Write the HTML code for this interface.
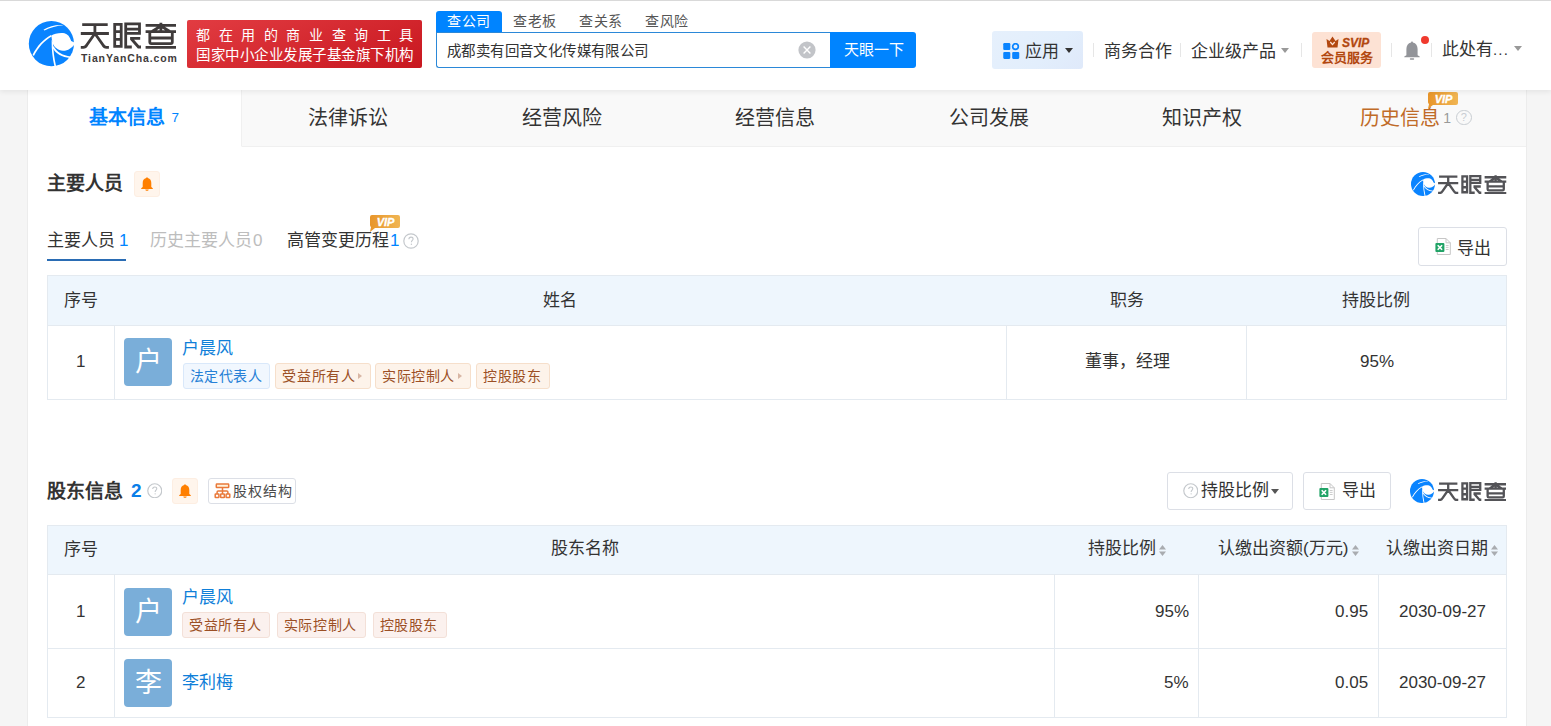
<!DOCTYPE html>
<html lang="zh-CN">
<head>
<meta charset="utf-8">
<style>
*{margin:0;padding:0;box-sizing:border-box}
html,body{width:1551px;height:726px;overflow:hidden}
body{background:#f5f5f5;font-family:"Liberation Sans",sans-serif;color:#333;position:relative}
.a{position:absolute;white-space:nowrap}
#hdr{position:absolute;left:0;top:0;width:1551px;height:90px;background:#fff;border-top:0;box-shadow:0 2px 5px rgba(0,0,0,.07);z-index:2}
.sep{position:absolute;width:1px;height:14px;background:#e6e6e6;top:43px}
.caret{position:absolute;width:0;height:0;border-left:4px solid transparent;border-right:4px solid transparent;border-top:5px solid #999}
#card{position:absolute;left:27px;top:90px;width:1500px;height:640px;background:#fff;border:1px solid #ececec;border-top:none}
.tab{position:absolute;top:0;height:57px;width:213.5px;background:#f9f9f9;border-bottom:1px solid #f0f0f0;font-size:20px;line-height:56px;text-align:center;color:#333}
.title{font-size:19px;font-weight:bold;color:#333;line-height:24px}
.bellbox{position:absolute;width:26px;height:26px;background:#fff5ec;border:1px solid #fdeee2;border-radius:3px}
.subtab{font-size:17px;line-height:20px;color:#333}
.btn{position:absolute;background:#fff;border:1px solid #dcdfe6;border-radius:3px}
table{border-collapse:collapse;position:absolute;table-layout:fixed}
td,th{border:1px solid #e4eaf0;font-size:17px;font-weight:normal;color:#333}
th{background:#eef6fd}
.av{position:absolute;left:9px;width:48px;height:48px;border-radius:4px;background:#7aaed9;color:#fff;font-size:27px;line-height:48px;text-align:center}
.nm{position:absolute;left:67px;font-size:17px;color:#0084ff;line-height:20px}
.tag{position:absolute;height:26px;line-height:24px;font-size:14px;letter-spacing:.6px;border:1px solid;border-radius:3px;padding:0 0 0 6px}
.arr{display:inline-block;width:0;height:0;border-left:4px solid #d8b6a4;border-top:3.3px solid transparent;border-bottom:3.3px solid transparent;margin-left:2.5px;vertical-align:middle;position:relative;top:-1px}
.tb{background:#f1f7fe;border-color:#d9e8fa;color:#2580d6}
.to{background:#fdf3ea;border-color:#f6dfcb;color:#9b4f25}
.tp{background:#fbf1ee;border-color:#f3e0d8;color:#9b4f25}
.logo-t{font-weight:bold;color:#3e3a3a}
</style>
</head>
<body>
<div id="hdr">
  <div class="a" style="left:0;top:0;width:1551px;height:1px;background:#d9d9d9"></div>
  <!-- logo -->
  <svg class="a" style="left:20px;top:14px" width="60" height="60" viewBox="20 14 60 60">
    <circle cx="51.4" cy="43.7" r="22.6" fill="#0a84ff"/>
    <path d="M51.4 35.5 C54 33.8 59.5 32.6 64.5 33.3 C67.5 34 70 37 71.2 41 L74.4 42.6 L74.2 44.4 C72.5 47.5 67.5 51 63 50.8 C58 50.6 54 47 52.6 43 C51.9 40.5 51.6 38 51.4 35.5Z" fill="#fff"/>
    <path d="M43.5 29.8 C49 26.5 56 24.5 63.5 25.2 C57 25.7 50 27.5 44.5 30.6 Z" fill="#fff"/>
    <path d="M32.6 54.8 C37 46 43 39.5 51 35 L51.8 36.5 C44.5 40.5 38.5 47 33.9 55.9 Z" fill="#fff"/>
    <path d="M51.6 40 C51.5 50 52.5 58 54.5 66.4 L56.1 66.2 C54.2 58 53.2 50 53 42 Z" fill="#fff"/>
    <path d="M53.5 46 C57 52.5 63 55.5 70.5 56.5 L70 57.9 C62 57.2 56 54 52.5 48 Z" fill="#fff"/>
  </svg>
  <svg class="a" style="left:78px;top:18px" width="102" height="34" viewBox="78 18 102 34" fill="none" stroke="#3f3b3b" stroke-width="2.8">
    <path d="M82.2 24.6 H107.7 M80.8 33.5 H108.9 M94.9 25 V34"/>
    <path d="M94.2 34.5 L86.8 45 Q85.6 47.3 83.3 47.3 H80.8 M95.6 34.5 L103 45 Q104.2 47.3 106.5 47.3 H108.9"/>
    <path d="M114.7 24.3 H121.2 V46.3 H114.7 Z M114.7 31.6 H121.2 M114.7 39.3 H121.2"/>
    <path d="M125.7 22.4 V47 H131.8 M125.7 23.8 H139.5 V33.3 H125.7 M125.7 29.1 H139.5 M130.1 38.3 H140.2 M131 38.5 L138.5 47 H141"/>
    <path d="M145.6 25.4 H176 M145.6 31.6 H176 M145.6 47.4 H176 M160.9 22.7 V31 M160 26.5 L152 31.5 M161.8 26.5 L169.8 31.5"/>
    <path d="M149.8 32 V42 Q149.8 43.6 151.4 43.6 H170.7 Q172.3 43.6 172.3 42 V32 M149.8 38 H172.3"/>
  </svg>
  <div class="a" style="left:81px;top:52px;font-size:10.5px;line-height:13px;font-weight:bold;color:#3e3a3a;letter-spacing:0.88px">TianYanCha.com</div>
  <!-- red banner -->
  <div class="a" style="left:187px;top:20px;width:235px;height:48px;border-radius:2px;background:linear-gradient(160deg,#e23c42,#c8171f)"></div>
  <div class="a" style="left:196px;top:25px;font-size:14px;line-height:20px;color:#fff;letter-spacing:8.6px">都在用的商业查询工具</div>
  <div class="a" style="left:196px;top:45px;font-size:14.5px;letter-spacing:0.5px;line-height:20px;color:#fff">国家中小企业发展子基金旗下机构</div>
  <!-- search tabs -->
  <div class="a" style="left:436px;top:11px;width:66px;height:22px;background:#0084ff;border-radius:3px 3px 0 0"></div>
  <div class="a" style="left:447px;top:11px;font-size:14px;letter-spacing:.6px;line-height:20px;color:#fff">查公司</div>
  <div class="a" style="left:513px;top:11px;font-size:14px;letter-spacing:.6px;line-height:20px;color:#555">查老板</div>
  <div class="a" style="left:579px;top:11px;font-size:14px;letter-spacing:.6px;line-height:20px;color:#555">查关系</div>
  <div class="a" style="left:645px;top:11px;font-size:14px;letter-spacing:.6px;line-height:20px;color:#555">查风险</div>
  <div class="a" style="left:436px;top:32px;width:396px;height:36px;border:1px solid #2b88d8;border-right:none;border-radius:0 0 0 3px;background:#fff"></div>
  <div class="a" style="left:447px;top:41px;font-size:14.5px;letter-spacing:.4px;line-height:20px;color:#333">成都卖有回音文化传媒有限公司</div>
  <svg class="a" style="left:798px;top:41px" width="18" height="18" viewBox="0 0 18 18"><circle cx="9" cy="9" r="8.6" fill="#c2c4c8"/><path d="M5.6 5.6 L12.4 12.4 M12.4 5.6 L5.6 12.4" stroke="#fff" stroke-width="1.4"/></svg>
  <div class="a" style="left:830px;top:32px;width:86px;height:36px;background:#0084ff;border-radius:0 3px 3px 0"></div>
  <div class="a" style="left:844px;top:40px;font-size:15px;line-height:20px;color:#fff">天眼一下</div>
  <!-- right nav -->
  <div class="a" style="left:992px;top:31px;width:91px;height:38px;border-radius:3px;background:linear-gradient(135deg,#e6f0fc 0%,#e2eefc 60%,#dfe9fa 100%)"></div>
  <svg class="a" style="left:1003px;top:42.5px" width="16.5" height="16" viewBox="0 0 17 17">
    <rect x="0" y="0" width="7.5" height="7.5" rx="1.2" fill="#0a84ff"/>
    <circle cx="13" cy="3.8" r="3" fill="none" stroke="#0a84ff" stroke-width="1.8"/>
    <rect x="0" y="9.5" width="7.5" height="7.5" rx="1.2" fill="#0a84ff"/>
    <rect x="9.5" y="9.5" width="7.5" height="7.5" rx="1.2" fill="#0a84ff"/>
  </svg>
  <div class="a" style="left:1025px;top:41px;font-size:17px;line-height:22px;color:#333">应用</div>
  <div class="caret" style="left:1065px;top:48px;border-top-color:#333"></div>
  <div class="sep" style="left:1093px"></div>
  <div class="a" style="left:1104px;top:41px;font-size:17px;line-height:22px;color:#333">商务合作</div>
  <div class="sep" style="left:1180px"></div>
  <div class="a" style="left:1191px;top:41px;font-size:17px;line-height:22px;color:#333">企业级产品</div>
  <div class="caret" style="left:1281px;top:48px"></div>
  <div class="sep" style="left:1301px"></div>
  <div class="a" style="left:1312px;top:32px;width:69px;height:36px;border-radius:3px;background:#fde2d4"></div>
  <svg class="a" style="left:1326px;top:36px" width="13" height="12" viewBox="0 0 13 12">
    <path d="M0.5 3 L3.5 5 L6.5 0.5 L9.5 5 L12.5 3 L11.5 11.5 L1.5 11.5 Z" fill="#b2470f"/>
    <path d="M4.3 6 L6.5 8.6 L8.7 6" stroke="#fde2d4" stroke-width="1.3" fill="none"/>
  </svg>
  <div class="a" style="left:1342px;top:35.5px;font-size:12px;line-height:14px;font-weight:bold;font-style:italic;color:#b2470f;-webkit-text-stroke:.3px #b2470f">SVIP</div>
  <div class="a" style="left:1321px;top:49px;font-size:13px;line-height:17px;font-weight:bold;color:#b2470f">会员服务</div>
  <div class="sep" style="left:1391px"></div>
  <svg class="a" style="left:1404px;top:41px" width="16" height="19" viewBox="0 0 16 19">
    <path d="M8 0.5 C8.6 0.5 8.9 1 8.9 1.4 C12 2 13.6 4.6 13.6 8 L13.6 14.3 L15.7 15.6 L15.7 16.3 L0.3 16.3 L0.3 15.6 L2.4 14.3 L2.4 8 C2.4 4.6 4 2 7.1 1.4 C7.1 1 7.4 0.5 8 0.5Z" fill="#929499"/>
    <rect x="5.8" y="17.3" width="4.4" height="1.5" rx=".7" fill="#929499"/>
  </svg>
  <div class="a" style="left:1421px;top:36px;width:8px;height:8px;border-radius:50%;background:#f03a2e"></div>
  <div class="sep" style="left:1431px"></div>
  <div class="a" style="left:1442px;top:39px;font-size:17px;line-height:22px;color:#333">此处有<span style="letter-spacing:1.2px;font-size:15px">...</span></div>
  <div class="caret" style="left:1514px;top:46px"></div>
</div>

<div id="card">
  <div class="tab" style="left:0;width:213.5px;border-right:1px solid #f0f0f0;background:#fff;border-bottom-color:#fff;color:#0084ff;font-weight:bold;font-size:19px">基本信息<span style="font-size:13.5px;font-weight:normal;margin-left:6px;position:relative;top:-2px">7</span></div>
  <div class="tab" style="left:213.5px">法律诉讼</div>
  <div class="tab" style="left:427px">经营风险</div>
  <div class="tab" style="left:640.5px">经营信息</div>
  <div class="tab" style="left:854px">公司发展</div>
  <div class="tab" style="left:1067.5px">知识产权</div>
  <div class="tab" style="left:1281px;width:217px;color:#c06b28"><span style="position:relative;left:-1.5px">历史信息<span style="font-size:14px;color:#999;margin-left:3px;position:relative;top:-2px">1</span><span style="display:inline-block;width:15.5px;height:15.5px;border:1.3px solid #c8cdd2;border-radius:50%;font-size:11px;line-height:13px;color:#c8cdd2;margin-left:5px;vertical-align:middle;position:relative;top:-2px">?</span></span></div>
  <svg class="a" style="left:1399px;top:1px" width="32" height="18" viewBox="0 0 32 18"><defs><linearGradient id="vg" x1="0" y1="0" x2="1" y2="0"><stop offset="0" stop-color="#e8952a"/><stop offset="1" stop-color="#f0b553"/></linearGradient></defs><path d="M3 1 H29 Q31 1 31 3 V12 Q31 14 29 14 H6 L1 18 L2 13 Q1 12.5 1 11 V3 Q1 1 3 1Z" fill="url(#vg)"/><text x="16.5" y="11.6" font-size="11" font-weight="bold" font-style="italic" fill="#fff" stroke="#fff" stroke-width=".35" text-anchor="middle" font-family="Liberation Sans">VIP</text></svg>
</div>

<!-- section 1 -->
<svg width="0" height="0" style="position:absolute">
  <defs>
    <linearGradient id="vg2" x1="0" y1="0" x2="1" y2="0"><stop offset="0" stop-color="#e8952a"/><stop offset="1" stop-color="#f0b553"/></linearGradient>
    <symbol id="ico" viewBox="28.8 21.1 45.2 45.2">
      <circle cx="51.4" cy="43.7" r="22.6" fill="#0a84ff"/>
      <path d="M51.4 35.5 C54 33.8 59.5 32.6 64.5 33.3 C67.5 34 70 37 71.2 41 L74.4 42.6 L74.2 44.4 C72.5 47.5 67.5 51 63 50.8 C58 50.6 54 47 52.6 43 C51.9 40.5 51.6 38 51.4 35.5Z" fill="#fff"/>
      <path d="M43.5 29.8 C49 26.5 56 24.5 63.5 25.2 C57 25.7 50 27.5 44.5 30.6 Z" fill="#fff"/>
      <path d="M32.6 54.8 C37 46 43 39.5 51 35 L51.8 36.5 C44.5 40.5 38.5 47 33.9 55.9 Z" fill="#fff"/>
      <path d="M51.6 40 C51.5 50 52.5 58 54.5 66.4 L56.1 66.2 C54.2 58 53.2 50 53 42 Z" fill="#fff"/>
      <path d="M53.5 46 C57 52.5 63 55.5 70.5 56.5 L70 57.9 C62 57.2 56 54 52.5 48 Z" fill="#fff"/>
    </symbol>
    <symbol id="lt" viewBox="80.7 22.3 95.5 26.4">
      <g fill="none" stroke="#4b4848" stroke-width="2.9">
      <path d="M82.2 24.6 H107.7 M80.8 33.5 H108.9 M94.9 25 V34"/>
      <path d="M94.2 34.5 L86.8 45 Q85.6 47.3 83.3 47.3 H80.8 M95.6 34.5 L103 45 Q104.2 47.3 106.5 47.3 H108.9"/>
      <path d="M114.7 24.3 H121.2 V46.3 H114.7 Z M114.7 31.6 H121.2 M114.7 39.3 H121.2"/>
      <path d="M125.7 22.4 V47 H131.8 M125.7 23.8 H139.5 V33.3 H125.7 M125.7 29.1 H139.5 M130.1 38.3 H140.2 M131 38.5 L138.5 47 H141"/>
      <path d="M145.6 25.4 H176 M145.6 31.6 H176 M145.6 47.4 H176 M160.9 22.7 V31 M160 26.5 L152 31.5 M161.8 26.5 L169.8 31.5"/>
      <path d="M149.8 32 V42 Q149.8 43.6 151.4 43.6 H170.7 Q172.3 43.6 172.3 42 V32 M149.8 38 H172.3"/>
      </g>
    </symbol>
    <symbol id="lt2" viewBox="80.7 22.3 95.5 26.4">
      <g fill="none" stroke="#535357" stroke-width="3.2">
      <path d="M82.2 24.6 H107.7 M80.8 33.5 H108.9 M94.9 25 V34"/>
      <path d="M94.2 34.5 L86.8 45 Q85.6 47.3 83.3 47.3 H80.8 M95.6 34.5 L103 45 Q104.2 47.3 106.5 47.3 H108.9"/>
      <path d="M114.7 24.3 H121.2 V46.3 H114.7 Z M114.7 31.6 H121.2 M114.7 39.3 H121.2"/>
      <path d="M125.7 22.4 V47 H131.8 M125.7 23.8 H139.5 V33.3 H125.7 M125.7 29.1 H139.5 M130.1 38.3 H140.2 M131 38.5 L138.5 47 H141"/>
      <path d="M145.6 25.4 H176 M145.6 31.6 H176 M145.6 47.4 H176 M160.9 22.7 V31 M160 26.5 L152 31.5 M161.8 26.5 L169.8 31.5"/>
      <path d="M149.8 32 V42 Q149.8 43.6 151.4 43.6 H170.7 Q172.3 43.6 172.3 42 V32 M149.8 38 H172.3"/>
      </g>
    </symbol>
    <symbol id="bell" viewBox="0 0 12 14"><path d="M6 0.3 C6.5 0.3 6.8 .7 6.8 1.1 C9.3 1.6 10.3 3.6 10.3 6 L10.3 10 L11.8 11.3 L11.8 11.9 L0.2 11.9 L0.2 11.3 L1.7 10 L1.7 6 C1.7 3.6 2.7 1.6 5.2 1.1 C5.2 .7 5.5 .3 6 .3Z M4.3 12.5 L7.7 12.5 C7.7 13.3 7 13.8 6 13.8 C5 13.8 4.3 13.3 4.3 12.5Z" fill="#ff7f00"/></symbol>
    <symbol id="q" viewBox="0 0 16 16"><circle cx="8" cy="8" r="7.2" fill="none" stroke="#c4c8cc" stroke-width="1.2"/><path d="M5.9 6.2 C5.9 4.9 6.8 4.1 8 4.1 C9.2 4.1 10.1 4.9 10.1 6 C10.1 7.3 8.4 7.6 8.4 9.2" fill="none" stroke="#c4c8cc" stroke-width="1.1"/><circle cx="8.4" cy="11.2" r=".7" fill="#c4c8cc"/></symbol>
    <symbol id="xl" viewBox="0 0 16 17"><path d="M2.3 0.5 H11 L15.3 4.8 V16.5 H2.3 Z" fill="#fff" stroke="#c6c6c6" stroke-width="1"/><path d="M11 0.5 V4.8 H15.3" fill="none" stroke="#c6c6c6" stroke-width="1"/><rect x="0.4" y="5" width="9" height="9" rx="1" fill="#21a366"/><path d="M2.7 7.2 L7.1 11.8 M7.1 7.2 L2.7 11.8" stroke="#fff" stroke-width="1.6"/><path d="M10.8 7.5 H13.6 M10.8 9.4 H13.6 M10.8 11.5 H13.6" stroke="#c6c6c6" stroke-width=".9"/></symbol>
    <symbol id="vip" viewBox="0 0 32 18"><path d="M3 1 H29 Q31 1 31 3 V12 Q31 14 29 14 H6 L1 18 L2 13 Q1 12.5 1 11 V3 Q1 1 3 1Z" fill="url(#vg2)"/><text x="16.5" y="11.6" font-size="11" font-weight="bold" font-style="italic" fill="#fff" stroke="#fff" stroke-width=".35" text-anchor="middle" font-family="Liberation Sans">VIP</text></symbol>
    <symbol id="sort" viewBox="0 0 7 11"><path d="M3.5 0 L7 4.6 H0Z M3.5 11 L7 6.4 H0Z" fill="#a9acb0"/></symbol>
  </defs>
</svg>
<div class="a title" style="left:47px;top:172px">主要人员</div>
<div class="bellbox" style="left:134px;top:171px"></div>
<svg class="a" style="left:140.7px;top:176.6px" width="12" height="14"><use href="#bell"/></svg>
<svg class="a" style="left:1410.7px;top:171.9px" width="24" height="24"><use href="#ico"/></svg>
<svg class="a" style="left:1438px;top:174.9px" width="68.6" height="19"><use href="#lt2"/></svg>

<div class="a subtab" style="left:47px;top:231px">主要人员<span style="color:#0084ff;margin-left:4px">1</span></div>
<div class="a" style="left:47px;top:259px;width:79px;height:2px;background:#2a6cb4"></div>
<div class="a subtab" style="left:150px;top:231px;color:#bdbdbd">历史主要人员<span style="margin-left:1px">0</span></div>
<div class="a subtab" style="left:287px;top:231px">高管变更历程<span style="color:#0084ff;margin-left:1px">1</span></div>
<svg class="a" style="left:369px;top:214px" width="32" height="18"><use href="#vip"/></svg>
<svg class="a" style="left:402.5px;top:232.5px" width="16" height="16"><use href="#q"/></svg>
<div class="btn" style="left:1418px;top:227px;width:89px;height:39px"></div>
<svg class="a" style="left:1434.5px;top:238px" width="16" height="17"><use href="#xl"/></svg>
<div class="a subtab" style="left:1457px;top:239px">导出</div>

<!-- table 1 -->
<div class="a" style="left:47px;top:275px;width:1460px;height:125px;border:1px solid #e4eaf0;background:#fff"></div>
<div class="a" style="left:48px;top:276px;width:1458px;height:49px;background:#eef6fd"></div>
<div class="a" style="left:48px;top:325px;width:1458px;height:1px;background:#e4eaf0"></div>
<div class="a" style="left:114px;top:325px;width:1px;height:75px;background:#e4eaf0"></div>
<div class="a" style="left:1006px;top:325px;width:1px;height:75px;background:#e4eaf0"></div>
<div class="a" style="left:1246px;top:325px;width:1px;height:75px;background:#e4eaf0"></div>
<div class="a subtab" style="left:64px;top:291px">序号</div>
<div class="a subtab" style="left:543px;top:291px">姓名</div>
<div class="a subtab" style="left:1110px;top:291px">职务</div>
<div class="a subtab" style="left:1342px;top:291px">持股比例</div>
<div class="a subtab" style="left:76px;top:352px">1</div>
<div class="a" style="left:124px;top:338px;width:48px;height:48px;border-radius:4px;background:#7aaed9;color:#fff;font-size:27px;line-height:48px;text-align:center">户</div>
<div class="a subtab" style="left:182px;top:339px;color:#0f7fd9">户晨风</div>
<div class="tag tb" style="left:182.5px;top:363px;width:87px">法定代表人</div>
<div class="tag to" style="left:275.4px;top:363px;width:95.4px">受益所有人<span class="arr"></span></div>
<div class="tag to" style="left:375px;top:363px;width:95.6px">实际控制人<span class="arr"></span></div>
<div class="tag to" style="left:476px;top:363px;width:73.5px">控股股东</div>
<div class="a subtab" style="left:1085px;top:352px">董事，经理</div>
<div class="a subtab" style="left:1360px;top:352px">95%</div>

<!-- section 2 -->
<div class="a title" style="left:47px;top:480px">股东信息<span style="color:#0a7ee8;margin-left:8px;position:relative;top:-1px">2</span></div>
<svg class="a" style="left:146.5px;top:482.7px" width="15.5" height="15.5"><use href="#q"/></svg>
<div class="bellbox" style="left:172px;top:478px"></div>
<svg class="a" style="left:178.7px;top:483.6px" width="12" height="14"><use href="#bell"/></svg>
<div class="btn" style="left:208px;top:478px;width:88px;height:26px"></div>
<svg class="a" style="left:214px;top:483px" width="17" height="16" viewBox="0 0 17 16" fill="none" stroke="#e9793a" stroke-width="1.5"><rect x="2.3" y="1.1" width="12.4" height="3.5" rx=".6" fill="#fff3dc"/><path d="M8.5 4.8 V8 M3.1 11 V9 Q3.1 8 4.1 8 H12.9 Q13.9 8 13.9 9 V11 M8.5 8 V11"/><rect x="1.2" y="11.1" width="3.7" height="3.4" rx=".5"/><rect x="6.65" y="11.1" width="3.7" height="3.4" rx=".5"/><rect x="12.1" y="11.1" width="3.7" height="3.4" rx=".5"/></svg>
<div class="a" style="left:233px;top:481px;font-size:14px;letter-spacing:1px;line-height:20px;color:#4a4a4a">股权结构</div>
<div class="btn" style="left:1167px;top:472px;width:126px;height:38px"></div>
<svg class="a" style="left:1182.5px;top:483px" width="15.5" height="15.5"><use href="#q"/></svg>
<div class="a subtab" style="left:1201px;top:481px">持股比例</div>
<div class="caret" style="left:1271px;top:489px;border-top-color:#555"></div>
<div class="btn" style="left:1303px;top:472px;width:88px;height:38px"></div>
<svg class="a" style="left:1318.5px;top:483px" width="16" height="17"><use href="#xl"/></svg>
<div class="a subtab" style="left:1342px;top:481px">导出</div>
<svg class="a" style="left:1410.1px;top:479.4px" width="24" height="24"><use href="#ico"/></svg>
<svg class="a" style="left:1437.6px;top:482.4px" width="68.6" height="19"><use href="#lt2"/></svg>

<!-- table 2 -->
<div class="a" style="left:47px;top:525px;width:1460px;height:193px;border:1px solid #e4eaf0;background:#fff"></div>
<div class="a" style="left:48px;top:526px;width:1458px;height:48px;background:#eef6fd"></div>
<div class="a" style="left:48px;top:574px;width:1458px;height:1px;background:#e4eaf0"></div>
<div class="a" style="left:48px;top:648px;width:1458px;height:1px;background:#e4eaf0"></div>
<div class="a" style="left:114px;top:574px;width:1px;height:143px;background:#e4eaf0"></div>
<div class="a" style="left:1054px;top:574px;width:1px;height:143px;background:#e4eaf0"></div>
<div class="a" style="left:1198px;top:574px;width:1px;height:143px;background:#e4eaf0"></div>
<div class="a" style="left:1378px;top:574px;width:1px;height:143px;background:#e4eaf0"></div>
<div class="a subtab" style="left:64px;top:540px">序号</div>
<div class="a subtab" style="left:551px;top:539px">股东名称</div>
<div class="a subtab" style="left:1088px;top:539px">持股比例</div>
<svg class="a" style="left:1158.5px;top:544.5px" width="7" height="11"><use href="#sort"/></svg>
<div class="a subtab" style="left:1218px;top:539px">认缴出资额(万元)</div>
<svg class="a" style="left:1351.5px;top:544.5px" width="7" height="11"><use href="#sort"/></svg>
<div class="a subtab" style="left:1386px;top:539px">认缴出资日期</div>
<svg class="a" style="left:1490.7px;top:544.5px" width="7" height="11"><use href="#sort"/></svg>
<div class="a subtab" style="left:76px;top:602px">1</div>
<div class="a" style="left:124px;top:588px;width:48px;height:48px;border-radius:4px;background:#7aaed9;color:#fff;font-size:27px;line-height:48px;text-align:center">户</div>
<div class="a subtab" style="left:182px;top:588px;color:#0f7fd9">户晨风</div>
<div class="tag tp" style="left:182px;top:612px;width:87.8px">受益所有人</div>
<div class="tag tp" style="left:276.8px;top:612px;width:89px">实际控制人</div>
<div class="tag tp" style="left:372.7px;top:612px;width:74px">控股股东</div>
<div class="a subtab" style="left:1155px;top:602px">95%</div>
<div class="a subtab" style="left:1335px;top:602px">0.95</div>
<div class="a subtab" style="left:1399px;top:602px">2030-09-27</div>
<div class="a subtab" style="left:76px;top:673px">2</div>
<div class="a" style="left:124px;top:659px;width:48px;height:48px;border-radius:4px;background:#7aaed9;color:#fff;font-size:27px;line-height:48px;text-align:center">李</div>
<div class="a subtab" style="left:182px;top:673px;color:#0f7fd9">李利梅</div>
<div class="a subtab" style="left:1164px;top:673px">5%</div>
<div class="a subtab" style="left:1335px;top:673px">0.05</div>
<div class="a subtab" style="left:1399px;top:673px">2030-09-27</div>
</body>
</html>
